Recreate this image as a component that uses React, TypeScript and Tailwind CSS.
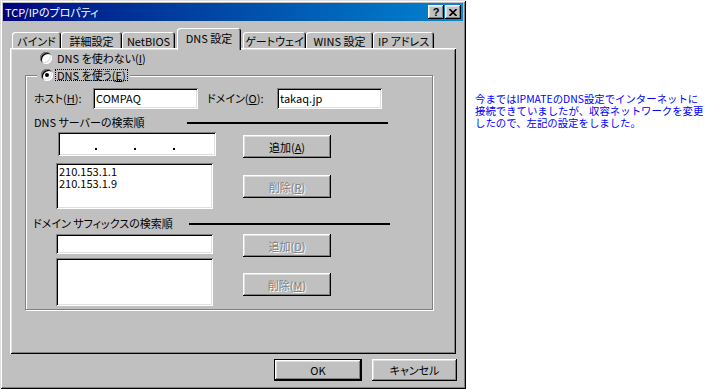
import React from "react";

const raised =
  "shadow-[inset_-1px_-1px_#000,inset_1px_1px_#fff,inset_-2px_-2px_#808080,inset_2px_2px_#dfdfdf]";
const sunken =
  "bg-white shadow-[inset_1px_1px_#808080,inset_-1px_-1px_#fff,inset_2px_2px_#000,inset_-2px_-2px_#dfdfdf]";

function Radio({ checked }: { checked?: boolean }) {
  return (
    <span className="flex h-[12px] w-[12px] shrink-0 items-center justify-center rounded-full bg-white shadow-[inset_1px_1px_#808080,inset_-1px_-1px_#fff,inset_2px_2px_#000,inset_-2px_-2px_#dfdfdf]">
      {checked && <span className="h-[4px] w-[4px] rounded-full bg-black" />}
    </span>
  );
}

function Btn({
  label,
  mnemonic,
  disabled,
  className,
}: {
  label: string;
  mnemonic?: string;
  disabled?: boolean;
  className: string;
}) {
  return (
    <div
      className={`flex items-center justify-center bg-[#c0c0c0] leading-[12px] ${raised} ${className} ${
        disabled ? "text-[#808080] [text-shadow:1px_1px_0_#fff]" : "text-black"
      }`}
    >
      <span>
        {label}
        {mnemonic && (
          <>
            (<u>{mnemonic}</u>)
          </>
        )}
      </span>
    </div>
  );
}

const tabs = [
  { label: "バインド", cls: "w-[49px]" },
  { label: "詳細設定", cls: "w-[61px]" },
  { label: "NetBIOS", cls: "w-[53px]" },
  { label: "DNS 設定", cls: "w-[64px] ml-[2px]", active: true },
  { label: "ゲートウェイ", cls: "w-[63px] ml-[2px]" },
  { label: "WINS 設定", cls: "w-[67px]" },
  { label: "IP アドレス", cls: "w-[61px]" },
];

export default function App() {
  return (
    <main className="flex min-h-screen bg-white font-['Noto_Sans_CJK_JP','Noto_Sans',sans-serif] text-[11px]">
      {/* dialog */}
      <div className="flex h-[389px] w-[466px] shrink-0 flex-col bg-[#c0c0c0] p-[3px] shadow-[inset_1px_1px_#dfdfdf,inset_-1px_-1px_#000,inset_2px_2px_#fff,inset_-2px_-2px_#808080] [font-feature-settings:'palt']">
        {/* title bar */}
        <div className="flex h-[18px] items-center bg-linear-to-r from-[#000080] to-[#1084d0] pl-[2px] pr-[2px]">
          <span className="text-[11px] leading-[12px] text-white">TCP/IPのプロパティ</span>
          <div className="ml-auto flex">
            <div
              className={`flex h-[14px] w-[16px] items-center justify-center bg-[#c0c0c0] ${raised}`}
            >
              <span className="font-['Liberation_Sans',sans-serif] text-[11px] font-bold leading-[10px] text-black">
                ?
              </span>
            </div>
            <div
              className={`ml-[1px] flex h-[14px] w-[16px] items-center justify-center bg-[#c0c0c0] ${raised}`}
            >
              <svg width="8" height="7" viewBox="0 0 8 7">
                <path d="M0.5 0 L7.5 7 M7.5 0 L0.5 7" stroke="#000" strokeWidth="1.6" />
              </svg>
            </div>
          </div>
        </div>

        {/* tabs */}
        <div className="mt-[7px] flex h-[20px] items-end pl-[9px]">
          {tabs.map((t) => (
            <div
              key={t.label}
              className={`flex items-center justify-center whitespace-nowrap rounded-t-[3px] bg-[#c0c0c0] leading-[12px] shadow-[inset_1px_1px_#fff,inset_-1px_0_#000,inset_-2px_0_#808080] ${t.cls} ${
                t.active ? "relative z-10 -mb-[2px] h-[22px] pb-[3px]" : "h-[16px] pt-[1px]"
              }`}
            >
              {t.label}
            </div>
          ))}
        </div>

        {/* tab panel */}
        <div className="ml-[7px] flex h-[306px] w-[446px] flex-col shadow-[inset_1px_1px_#fff,inset_-1px_-1px_#000,inset_2px_2px_#dfdfdf,inset_-2px_-2px_#808080]">
          <div className="ml-[30px] mt-[4px] flex h-[12px] items-center gap-[5px] leading-[12px]">
            <Radio />
            <span>
              DNS を使わない(<u>I</u>)
            </span>
          </div>

          {/* group box */}
          <div className="ml-[15px] mt-[11px] flex h-[235px] w-[408px] flex-col border border-[#808080] shadow-[inset_1px_1px_#fff,1px_1px_#fff]">
            <div className="-mt-[8px] ml-[11px] flex h-[14px] w-fit items-center gap-[2px] bg-[#c0c0c0] pl-[4px] pr-[2px]">
              <Radio checked />
              <span className="border border-dotted border-black px-[1px] leading-[10px]">
                DNS を使う(<u>E</u>)
              </span>
            </div>

            <div className="mt-[6px] flex h-[21px] items-center pl-[8px]">
              <span className="w-[59px]">
                ホスト(<u>H</u>):
              </span>
              <div className={`flex h-[21px] w-[105px] items-center pl-[3px] ${sunken}`}>COMPAQ</div>
              <span className="ml-[9px] w-[70px]">
                ドメイン(<u>O</u>):
              </span>
              <div className={`flex h-[21px] w-[105px] items-center pl-[3px] ${sunken}`}>takaq.jp</div>
            </div>

            <div className="mt-[7px] flex h-[13px] items-center pl-[8px]">
              <span className="w-[153px] leading-[13px]">DNS サーバーの検索順</span>
              <div className="h-[2px] w-[201px] bg-black" />
            </div>

            <div className="mt-[3px] flex">
              <div className="flex flex-col pl-[30px]">
                <div className={`ml-[2px] flex h-[24px] w-[158px] gap-[37px] pl-[37px] pt-[16px] ${sunken}`}>
                  <div className="h-[2px] w-[2px] bg-black" />
                  <div className="h-[2px] w-[2px] bg-black" />
                  <div className="h-[2px] w-[2px] bg-black" />
                </div>
                <div className={`mt-[7px] flex h-[46px] w-[157px] flex-col pl-[3px] pt-[2px] ${sunken}`}>
                  <div className="h-[12px] leading-[12px]">210.153.1.1</div>
                  <div className="h-[12px] leading-[12px]">210.153.1.9</div>
                </div>
              </div>
              <div className="ml-[27px] flex flex-col">
                <Btn label="追加" mnemonic="A" className="mt-[3px] h-[23px] w-[88px]" />
                <Btn label="削除" mnemonic="R" disabled className="mt-[17px] h-[23px] w-[88px]" />
              </div>
            </div>

            <div className="mt-[8px] flex h-[13px] items-center pl-[7px]">
              <span className="w-[156px] leading-[13px]">ドメイン サフィックスの検索順</span>
              <div className="h-[2px] w-[201px] bg-black" />
            </div>

            <div className="mt-[4px] flex">
              <div className="flex flex-col pl-[30px]">
                <div className={`h-[20px] w-[157px] ${sunken}`} />
                <div className={`mt-[4px] h-[48px] w-[157px] ${sunken}`} />
              </div>
              <div className="ml-[30px] flex flex-col">
                <Btn label="追加" mnemonic="D" disabled className="h-[23px] w-[88px]" />
                <Btn label="削除" mnemonic="M" disabled className="mt-[16px] h-[23px] w-[88px]" />
              </div>
            </div>
          </div>
        </div>

        {/* dialog buttons */}
        <div className="mt-[5px] flex justify-end pr-[6px]">
          <div className="h-[22px] w-[88px] border border-black">
            <Btn label="OK" className="h-full w-full" />
          </div>
          <Btn label="キャンセル" className="ml-[10px] h-[22px] w-[85px]" />
        </div>
      </div>

      {/* note */}
      <div className="ml-[9px] flex flex-col whitespace-nowrap pt-[93px] text-[10.4px] text-[#0000ff]">
        <div className="h-[12px] leading-[12px]">今まではIPMATEのDNS設定でインターネットに</div>
        <div className="h-[12px] leading-[12px]">接続できていましたが、収容ネットワークを変更</div>
        <div className="h-[12px] leading-[12px]">したので、左記の設定をしました。</div>
      </div>
    </main>
  );
}
